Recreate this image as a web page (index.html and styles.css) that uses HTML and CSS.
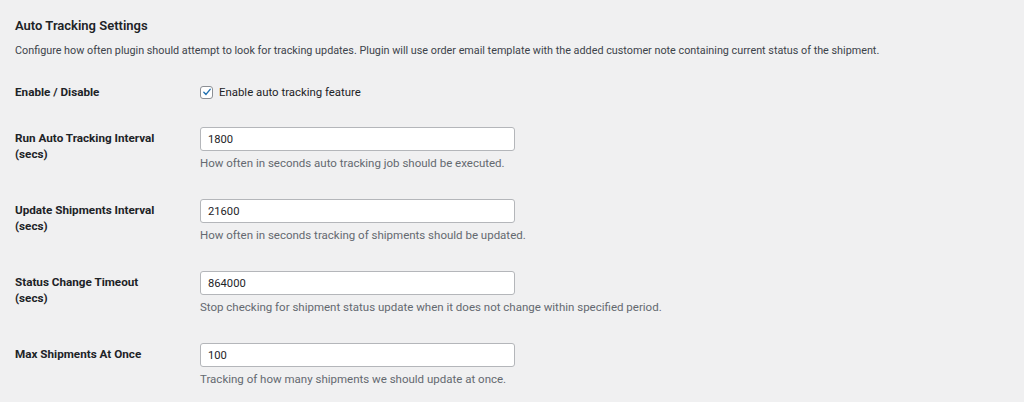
FILE: index.html
```html
<!DOCTYPE html>
<html>
<head>
<meta charset="utf-8">
<link rel="stylesheet" href="styles.css">
</head>
<body>
<div class="wrap">
  <h2 class="title">Auto Tracking Settings</h2>
  <p class="intro">Configure how often plugin should attempt to look for tracking updates. Plugin will use order email template with the added customer note containing current status of the shipment.</p>
  <table class="form-table">
    <tr class="row-check">
      <th>Enable / Disable</th>
      <td>
        <label class="check">
          <span class="box"><svg viewBox="0 0 12 12" width="10" height="10"><path d="M2.2 6.3 L4.8 8.9 L9.8 2.8" fill="none" stroke="#2271b1" stroke-width="1.7" stroke-linecap="round" stroke-linejoin="round"/></svg></span>
          Enable auto tracking feature
        </label>
      </td>
    </tr>
    <tr>
      <th>Run Auto Tracking Interval (secs)</th>
      <td><input class="field" type="text" value="1800"><p class="help">How often in seconds auto tracking job should be executed.</p></td>
    </tr>
    <tr>
      <th>Update Shipments Interval (secs)</th>
      <td><input class="field" type="text" value="21600"><p class="help">How often in seconds tracking of shipments should be updated.</p></td>
    </tr>
    <tr>
      <th>Status Change Timeout (secs)</th>
      <td><input class="field" type="text" value="864000"><p class="help">Stop checking for shipment status update when it does not change within specified period.</p></td>
    </tr>
    <tr>
      <th>Max Shipments At Once</th>
      <td><input class="field" type="text" value="100"><p class="help">Tracking of how many shipments we should update at once.</p></td>
    </tr>
  </table>
</div>
</body>
</html>
```
FILE: styles.css
```css
html, body {
  margin: 0;
  padding: 0;
  background: #f0f0f1;
}
body {
  font-family: Roboto, "Noto Sans", sans-serif;
  color: #1d2327;
  font-size: 11px;
  line-height: 16px;
}
.wrap {
  padding: 18px 15px 0 15px;
}
.title {
  margin: 0;
  font-size: 13px;
  line-height: 16px;
  font-weight: 600;
}
.intro {
  margin: 9px 0 0 0;
  font-size: 10.8px;
  color: #3c434a;
}
.form-table {
  border-collapse: collapse;
  margin-top: 10px;
}
.form-table th {
  width: 185px;
  padding: 17px 40px 0 0;
  text-align: left;
  vertical-align: top;
  font-weight: 700;
  font-size: 11.7px;
  box-sizing: border-box;
  line-height: 16px;
}
.form-table td {
  padding: 14px 0 14px 0;
  vertical-align: top;
}
.row-check th {
  padding-top: 15px;
}
.row-check td {
  padding-top: 15px;
  padding-bottom: 13px;
}
.check {
  display: flex;
  align-items: center;
  gap: 6px;
  font-size: 11.4px;
  color: #1d2327;
}
.box {
  width: 11px;
  height: 11px;
  border: 1px solid #8c8f94;
  border-radius: 3px;
  background: #fff;
  display: flex;
  align-items: center;
  justify-content: center;
}
.field {
  display: block;
  box-sizing: border-box;
  width: 315px;
  height: 24px;
  margin: 0;
  padding: 0 7px;
  border: 1px solid #b4b6ba;
  border-radius: 3px;
  background: #fff;
  font-family: inherit;
  font-size: 11.2px;
  color: #1d2327;
}
.help {
  margin: 4px 0 0 0;
  font-size: 11.5px;
  color: #646970;
}
```
